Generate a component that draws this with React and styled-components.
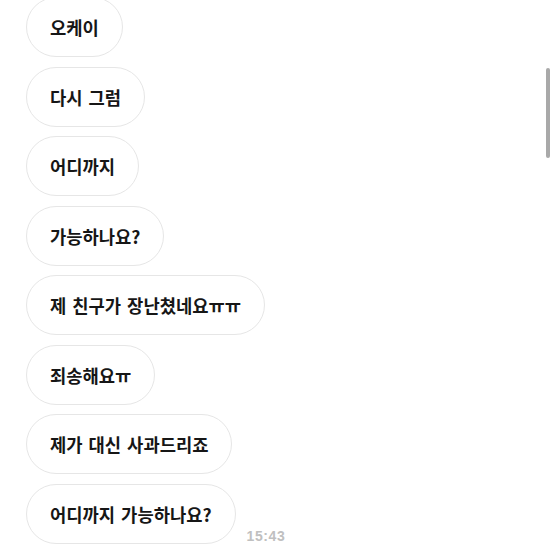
import React from 'react';
import styled, { createGlobalStyle } from 'styled-components';

const messages = [
  '오케이',
  '다시 그럼',
  '어디까지',
  '가능하나요?',
  '제 친구가 장난쳤네요ㅠㅠ',
  '죄송해요ㅠ',
  '제가 대신 사과드리죠',
  '어디까지 가능하나요?',
];

const GlobalStyle = createGlobalStyle`
  html, body {
    margin: 0;
    padding: 0;
    background: #ffffff;
    overflow: hidden;
  }
  body {
    font-family: "Noto Sans CJK KR", "Noto Sans", sans-serif;
  }
`;

const Screen = styled.div`
  position: relative;
  width: 554px;
  height: 554px;
  overflow: hidden;
  background: #ffffff;
`;

const Thread = styled.div`
  display: flex;
  flex-direction: column;
  align-items: flex-start;
  gap: 9.5px;
  margin-top: -3px;
  padding-left: 26px;
`;

const Row = styled.div`
  display: flex;
  align-items: flex-end;
  gap: 11px;
`;

const Bubble = styled.div`
  box-sizing: border-box;
  height: 60px;
  display: flex;
  align-items: center;
  padding: 0 23px;
  border: 1px solid #e6e6e6;
  border-radius: 30px;
  background: #ffffff;
  color: #161616;
  font-size: 17.7px;
  font-weight: 600;
  word-spacing: 2px;
  white-space: nowrap;
`;

const Time = styled.span`
  font-family: "Liberation Sans", Arial, sans-serif;
  font-size: 14px;
  font-weight: 700;
  letter-spacing: 0.6px;
  color: #c0c0c0;
  margin-bottom: 0;
`;

const ScrollThumb = styled.div`
  position: absolute;
  right: 4px;
  top: 68px;
  width: 4px;
  height: 90px;
  border-radius: 2px;
  background: #a9a9a9;
`;

const App = () => {
  return (
    <Screen>
      <GlobalStyle />
      <Thread>
        {messages.map((text, i) => (
          <Row key={i}>
            <Bubble>{text}</Bubble>
            {i === messages.length - 1 && <Time>15:43</Time>}
          </Row>
        ))}
      </Thread>
      <ScrollThumb />
    </Screen>
  );
};

export default App;
